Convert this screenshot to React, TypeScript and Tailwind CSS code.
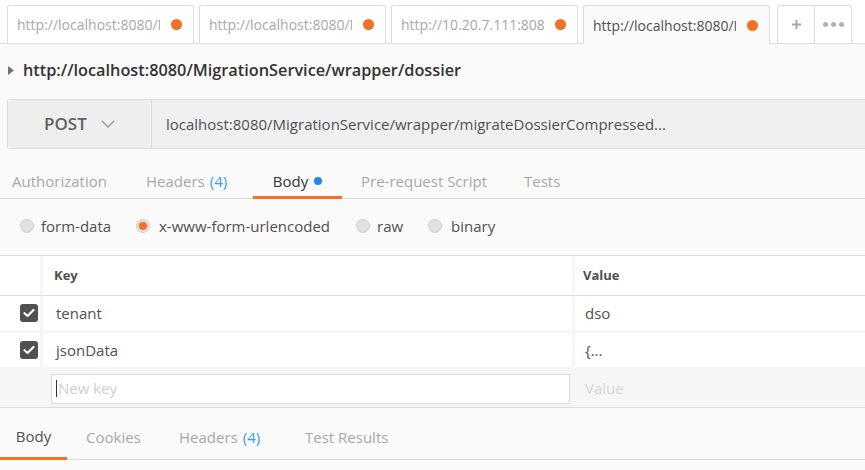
import React from "react";

const tabs = [
  { url: "http://localhost:8080/M", active: false },
  { url: "http://localhost:8080/M", active: false },
  { url: "http://10.20.7.111:8080", active: false },
  { url: "http://localhost:8080/M", active: true },
];

function Check() {
  return (
    <div className="w-[18px] h-[18px] rounded-[3px] bg-[#505050] flex items-center justify-center">
      <svg width="12" height="10" viewBox="0 0 12 10">
        <path d="M1.5 5.2 L4.5 8 L10.5 2" stroke="white" strokeWidth="2.2" fill="none" strokeLinecap="round" strokeLinejoin="round" />
      </svg>
    </div>
  );
}

function Radio({ on }: { on?: boolean }) {
  return (
    <div className="w-[14px] h-[14px] shrink-0 rounded-full bg-[#e0e0e0] border border-[#d0d0d0] flex items-center justify-center">
      {on && <div className="w-[8px] h-[8px] rounded-full bg-[#f47023]" />}
    </div>
  );
}

export default function App() {
  return (
    <div className="w-[865px] h-[470px] overflow-hidden bg-[#fafafa] font-['Open_Sans',sans-serif] text-[#505050]">
      {/* top tab bar */}
      <div className="h-[44px] bg-white border-b border-[#dcdcdc] flex items-end pl-[7px]">
        {tabs.map((t, i) => (
          <div
            key={i}
            className={
              "w-[187px] mr-[5px] border border-b-0 border-[#dcdcdc] rounded-t-[3px] flex items-center pl-[9px] pr-[11px] " +
              (t.active ? "bg-[#fafafa] h-[39px] -mb-px text-[#505050]" : "h-[38px] bg-white text-[#a8a8a8]")
            }
          >
            <div className="overflow-hidden text-clip whitespace-nowrap text-[14px] w-[143px]">{t.url}</div>
            <div className="ml-auto w-[11px] h-[11px] rounded-full bg-[#f47023]" />
          </div>
        ))}
        <div className="ml-[2px] h-[38px] flex border border-b-0 border-[#dcdcdc] rounded-t-[3px] bg-white">
          <div className="w-[37px] flex items-center justify-center border-r border-[#dcdcdc]">
            <svg width="11" height="11" viewBox="0 0 11 11">
              <path d="M5.5 1 V10 M1 5.5 H10" stroke="#a8a8a8" strokeWidth="2" />
            </svg>
          </div>
          <div className="w-[36px] flex items-center justify-center gap-[3px]">
            <div className="w-[5px] h-[5px] rounded-full bg-[#b0b0b0]" />
            <div className="w-[5px] h-[5px] rounded-full bg-[#b0b0b0]" />
            <div className="w-[5px] h-[5px] rounded-full bg-[#b0b0b0]" />
          </div>
        </div>
      </div>

      {/* title */}
      <div className="h-[55px] flex items-center pl-[8px]">
        <svg width="6" height="9" viewBox="0 0 6 9" className="mr-[9px] mt-[-3px]">
          <path d="M0 0 L6 4.5 L0 9 Z" fill="#707070" />
        </svg>
        <span className="text-[16.3px] font-semibold text-[#333] mt-[-3px]">http://localhost:8080/MigrationService/wrapper/dossier</span>
      </div>

      {/* url bar */}
      <div className="ml-[7px] h-[50px] flex border border-r-0 border-[#dcdcdc] rounded-l-[3px] bg-[#efefef]">
        <div className="w-[144px] flex items-center pl-[36px] border-r border-[#dcdcdc] bg-[#eeeeee]">
          <span className="text-[17px] font-semibold text-[#606060]">POST</span>
          <svg width="14" height="8" viewBox="0 0 14 8" className="ml-[14px]">
            <path d="M1 1 L7 7 L13 1" stroke="#a0a0a0" strokeWidth="1.6" fill="none" />
          </svg>
        </div>
        <div className="flex items-center pl-[14px] text-[15px] text-[#505050] bg-[#f0f0f0] flex-1">
          localhost:8080/MigrationService/wrapper/migrateDossierCompressed...
        </div>
      </div>

      {/* request tabs */}
      <div className="mt-[15px] h-[35px] flex items-stretch border-b border-[#dcdcdc] text-[15px] text-[#a8a8a8]">
        <div className="pl-[12px] w-[146px] flex items-center">Authorization</div>
        <div className="w-[107px] flex items-center">
          Headers <span className="ml-[5px] text-[#3b9ce8]">(4)</span>
        </div>
        <div className="w-[89px] flex items-center justify-center border-b-[3px] border-[#f47023] text-[#333] mb-[-1px] pt-[2px]">
          Body
          <span className="ml-[6px] w-[8px] h-[8px] rounded-full bg-[#1e88e5]" />
        </div>
        <div className="ml-[19px] w-[163px] flex items-center">Pre-request Script</div>
        <div className="flex items-center">Tests</div>
      </div>

      {/* radios */}
      <div className="h-[56px] flex items-center text-[15px] text-[#505050] pl-[20px] pb-[2px]">
        <div className="w-[116px] flex items-center">
          <Radio />
          <span className="ml-[7px]">form-data</span>
        </div>
        <div className="w-[220px] flex items-center">
          <Radio on />
          <span className="ml-[9px]">x-www-form-urlencoded</span>
        </div>
        <div className="w-[72px] flex items-center">
          <Radio />
          <span className="ml-[7px]">raw</span>
        </div>
        <div className="flex items-center">
          <Radio />
          <span className="ml-[9px]">binary</span>
        </div>
      </div>

      {/* table */}
      <div className="border-t border-[#dcdcdc]">
        <div className="h-[40px] flex bg-white border-b border-[#dcdcdc]">
          <div className="w-[43px] border-r-[3px] border-[#f6f6f6]" />
          <div className="w-[532px] flex items-center pl-[11px] text-[13px] font-bold text-[#505050] border-r-[3px] border-[#f6f6f6]">Key</div>
          <div className="flex items-center pl-[8px] text-[13px] font-bold text-[#505050]">Value</div>
        </div>
        {[
          ["tenant", "dso"],
          ["jsonData", "{..."],
        ].map(([k, v], i) => (
          <div key={i} className="h-[37px] flex bg-white border-b-[3px] border-[#f6f6f6]">
            <div className="w-[43px] flex items-center justify-end pr-[2px] border-r-[3px] border-[#f6f6f6]">
              <Check />
            </div>
            <div className="w-[532px] flex items-center pl-[13px] text-[15px] text-[#505050] border-r-[3px] border-[#f6f6f6]">{k}</div>
            <div className="flex items-center pl-[10px] text-[15px] text-[#505050]">{v}</div>
          </div>
        ))}
        <div className="h-[38px] flex items-center bg-[#f6f6f6] border-b border-[#dcdcdc]">
          <div className="ml-[51px] w-[519px] h-[30px] bg-white border border-[#dcdcdc] flex items-center pl-[4px] text-[15px] text-[#cfcfcf]">
            <span className="w-px h-[17px] bg-[#333] mr-[1px]" />
            New key
          </div>
          <div className="ml-[15px] text-[15px] text-[#d6d6d6]">Value</div>
        </div>
      </div>

      {/* response tabs */}
      <div className="h-[52px] flex items-stretch border-b border-[#dcdcdc] text-[15px] text-[#a8a8a8]">
        <div className="w-[67px] flex items-center justify-center border-b-[3px] border-[#f47023] text-[#505050] mb-[-1px] pt-[8px]">Body</div>
        <div className="ml-[19px] w-[93px] flex items-center pt-[8px]">Cookies</div>
        <div className="w-[126px] flex items-center pt-[8px]">
          Headers <span className="ml-[5px] text-[#3b9ce8]">(4)</span>
        </div>
        <div className="flex items-center pt-[8px]">Test Results</div>
      </div>
    </div>
  );
}
